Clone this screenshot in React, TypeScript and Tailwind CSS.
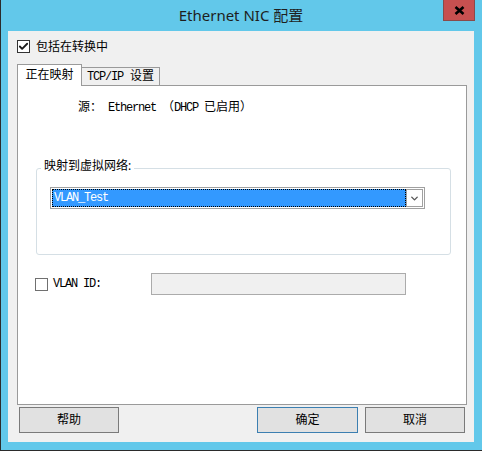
import { Check, ChevronDown } from 'lucide-react';

const sans = 'font-["Noto_Sans","Noto_Sans_CJK_SC",sans-serif]';
const mono = 'font-["Liberation_Mono","Noto_Sans_CJK_SC",monospace]';

function Box({ checked }: { checked?: boolean }) {
  return (
    <span
      className={`flex h-[13px] w-[13px] shrink-0 items-center justify-center border bg-white ${
        checked ? 'border-[#333333]' : 'border-[#707070]'
      }`}
    >
      {checked && <Check className="size-[11px] text-[#1a1a1a]" strokeWidth={4} />}
    </span>
  );
}

function Btn({ label, focused, wide }: { label: string; focused?: boolean; wide?: boolean }) {
  return (
    <button
      className={`flex h-[26px] items-center justify-center border bg-[#e1e1e1] text-[12px] text-black ${
        wide ? 'w-[101px]' : 'w-[100px]'
      } ${focused ? 'border-[#3c7fb1]' : 'border-[#7a7a7a]'}`}
    >
      {label}
    </button>
  );
}

export default function App() {
  return (
    <div
      className={`flex h-[451px] w-[482px] flex-col border-b border-l border-[#2b2b2b] bg-[#62c8ea] pb-[8px] pl-[7px] pr-[8px] ${sans}`}
    >
      {/* Title bar */}
      <div className="grid h-[31px] shrink-0 grid-cols-[1fr_auto_1fr]">
        <div />
        <div className="self-center pb-[1px] text-[15px] leading-[20px] text-[#1e1e1e]">
          Ethernet NIC 配置
        </div>
        <div className="flex justify-end">
          <div className="mr-[-1px] flex h-[21px] w-[32px] items-center justify-center border border-t-0 border-[#8a4a4a] bg-[#c75050]">
            <svg width="11" height="9" viewBox="0 0 11 9">
              <path d="M1.5 1 L9.5 8 M9.5 1 L1.5 8" stroke="#000" strokeWidth="2.6" />
            </svg>
          </div>
        </div>
      </div>

      {/* Body */}
      <div className="flex flex-1 flex-col bg-[#f0f0f0] pl-[9px] pr-[7px] pt-[9px] pb-[9px]">
        <div className="flex h-[13px] items-center gap-[6px]">
          <Box checked />
          <span className="text-[12px] leading-[16px] text-black">包括在转换中</span>
        </div>

        {/* Tabs */}
        <div className="relative z-10 mb-[-1px] mt-[11px] flex h-[22px] items-end">
          <div className="flex h-full w-[65px] items-center justify-center border border-b-0 border-[#9a9a9a] bg-white pb-[1px] text-[12px] text-black">
            正在映射
          </div>
          <div
            className={`flex h-[19px] w-[78px] items-center justify-center border border-l-0 border-[#9a9a9a] bg-[#f0f0f0] text-[12px] text-black ${mono}`}
          >
            <span className="tracking-[-1.2px]">TCP/IP</span>
            <span className="ml-[7px]">设置</span>
          </div>
        </div>

        {/* Panel */}
        <div className="flex h-[320px] flex-col border border-[#9a9a9a] bg-white pt-[14px]">
          <div className={`ml-[60px] flex h-[16px] items-center text-[12px] text-black ${mono}`}>
            <span>源：</span>
            <span className="ml-[6px] tracking-[-1.2px]">Ethernet</span>
            <span className="ml-[6px]">（</span>
            <span className="tracking-[-1.2px]">DHCP</span>
            <span className="ml-[6px]">已启用）</span>
          </div>

          <fieldset className="ml-[18px] mt-[42px] h-[97px] w-[415px] rounded-[3px] border border-[#d5dfe5]">
            <legend className="ml-[4px] px-[3px] pb-[4px] text-[12px] leading-[16px] text-black">
              映射到虚拟网络:
            </legend>
            <div className="ml-[13px] mt-[9px] flex h-[22px] w-[375px] border border-[#a0a0a0] bg-white p-[1px]">
              <div
                className={`flex flex-1 items-center border border-dotted border-black bg-[#3399ff] pl-[1px] text-[12px] text-white ${mono}`}
              >
                <span className="tracking-[-1.2px]">VLAN_Test</span>
              </div>
              <div className="flex w-[17px] items-center justify-center border border-[#a0a0a0] bg-white">
                <ChevronDown className="size-[11px] text-[#555]" strokeWidth={3} />
              </div>
            </div>
          </fieldset>

          <div className="ml-[17px] mt-[18px] flex h-[22px] items-center">
            <Box />
            <span className={`ml-[5px] w-[98px] text-[12px] tracking-[-1.2px] text-black ${mono}`}>
              VLAN ID:
            </span>
            <div className="h-[22px] w-[255px] border border-[#ababab] bg-[#f0f0f0]" />
          </div>
        </div>

        {/* Buttons */}
        <div className="mt-[2px] flex px-[2px]">
          <Btn label="帮助" />
          <div className="ml-auto flex gap-[7px]">
            <Btn label="确定" focused wide />
            <Btn label="取消" />
          </div>
        </div>
      </div>
    </div>
  );
}
